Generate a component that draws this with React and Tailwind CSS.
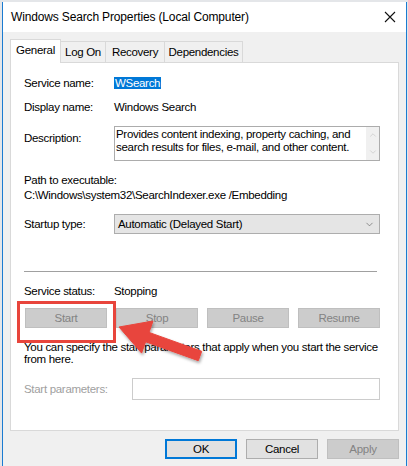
import { ChevronDown, ChevronUp } from "lucide-react";

const font = "font-['Segoe_UI','Liberation_Sans',sans-serif]";

// Вкладка диалога
const Tab = ({ label, active, width }) =>
  active ? (
    <div
      className={`relative z-10 -mb-px flex h-[24px] items-start justify-center border border-b-0 border-[#d9d9d9] bg-white pt-[3px] ${width}`}
    >
      {label}
    </div>
  ) : (
    <div
      className={`flex h-[21px] items-center justify-center border border-l-0 border-b-0 border-[#d9d9d9] bg-[#f0f0f0] pt-[1px] ${width}`}
    >
      {label}
    </div>
  );

// Серая неактивная кнопка
const DisabledButton = ({ label }) => (
  <div className="flex h-[20px] w-[82px] items-center justify-center border border-[#bfbfbf] bg-[#cccccc] text-[#838383]">
    {label}
  </div>
);

const Row = ({ label, children, className = "" }) => (
  <div className={`flex items-center ${className}`}>
    <div className="w-[90px] shrink-0">{label}</div>
    <div className="flex-1">{children}</div>
  </div>
);

export default function App() {
  return (
    <div
      className={`relative h-[466px] w-[408px] overflow-hidden bg-[#e4e6e9] pl-[2px] pt-[2px] text-[11.5px] leading-[15px] tracking-[-0.3px] text-black ${font}`}
    >
      {/* окно */}
      <div className="flex h-[470px] w-[405px] flex-col border-x border-[#1b7bd1] bg-[#f0f0f0]">
        {/* заголовок */}
        <div className="flex h-[30px] shrink-0 items-center justify-between bg-white pl-[8px] pr-[8px] text-[12px] tracking-[-0.15px]">
          <span>Windows Search Properties (Local Computer)</span>
          <svg width="12" height="12" viewBox="0 0 12 12" className="mr-[2px]">
            <path d="M1 1 L11 11 M11 1 L1 11" stroke="#111" strokeWidth="1.1" />
          </svg>
        </div>

        <div className="px-[7px] pt-[7px]">
          {/* вкладки */}
          <div className="flex items-end">
            <Tab label="General" active width="w-[51px]" />
            <Tab label="Log On" width="w-[45px]" />
            <Tab label="Recovery" width="w-[59px]" />
            <Tab label="Dependencies" width="w-[78px]" />
          </div>

          {/* панель */}
          <div className="h-[369px] border border-[#d9d9d9] bg-white pl-[13px] pr-[18px] pt-[13px]">
            <Row label="Service name:" className="h-[15px]">
              <span className="bg-[#0078d7] px-[1px] leading-[12px] text-white">
                WSearch
              </span>
            </Row>
            <Row label="Display name:" className="mt-[9px] h-[15px]">
              Windows Search
            </Row>

            <div className="mt-[11px] flex items-start">
              <div className="w-[90px] shrink-0 pt-[5px]">Description:</div>
              <div className="flex h-[35px] flex-1 border border-[#acacac]">
                <div className="flex-1 whitespace-nowrap pl-[1px] pt-[1px] leading-[13px]">
                  Provides content indexing, property caching, and
                  <br />
                  search results for files, e-mail, and other content.
                </div>
                <div className="flex w-[13px] flex-col items-center justify-between bg-[#f0f0f0] py-[3px] text-[#c2c2c2]">
                  <ChevronUp size={10} strokeWidth={1.5} />
                  <ChevronDown size={10} strokeWidth={1.5} />
                </div>
              </div>
            </div>

            <div className="mt-[12px]">Path to executable:</div>
            <div>C:\Windows\system32\SearchIndexer.exe /Embedding</div>

            <Row label="Startup type:" className="mt-[11px]">
              <div className="flex h-[20px] items-center justify-between border border-[#adadad] bg-[#e5e5e5] pl-[3px] pr-[4px]">
                <span>Automatic (Delayed Start)</span>
                <ChevronDown size={11} strokeWidth={1.3} className="text-[#555]" />
              </div>
            </Row>

            <div className="mr-[3px] mt-[37px] h-px bg-[#a0a0a0]" />

            <Row label="Service status:" className="mt-[12px] h-[15px]">
              Stopping
            </Row>

            <div className="ml-[1px] mt-[9px] flex justify-between">
              <DisabledButton label="Start" />
              <DisabledButton label="Stop" />
              <DisabledButton label="Pause" />
              <DisabledButton label="Resume" />
            </div>

            <div className="mt-[13px] whitespace-nowrap leading-[12px]">
              You can specify the start parameters that apply when you start the service
              <br />
              from here.
            </div>

            <div className="mt-[13px] flex items-center">
              <div className="w-[108px] shrink-0 text-[#a0a0a0]">
                Start parameters:
              </div>
              <div className="h-[22px] flex-1 border border-[#cccccc] bg-white" />
            </div>
          </div>

          {/* нижние кнопки */}
          <div className="mt-[8px] flex justify-end gap-[9px]">
            <div className="flex h-[20px] w-[72px] items-center justify-center border-2 border-[#0078d7] bg-[#e1e1e1]">
              OK
            </div>
            <div className="flex h-[20px] w-[72px] items-center justify-center border border-[#adadad] bg-[#e1e1e1]">
              Cancel
            </div>
            <div className="flex h-[20px] w-[72px] items-center justify-center border border-[#bfbfbf] bg-[#cccccc] text-[#838383]">
              Apply
            </div>
          </div>
        </div>
      </div>

      {/* выделение и стрелка поверх */}
      <div className="absolute left-[17px] top-[301px] h-[42px] w-[99px] border-[3px] border-[#e8453c]" />
      <svg
        className="absolute left-0 top-0"
        width="408"
        height="466"
        viewBox="0 0 408 466"
      >
        <defs>
          <filter id="sh" x="-20%" y="-20%" width="140%" height="140%">
            <feDropShadow dx="1" dy="2" stdDeviation="1.5" floodColor="#000" floodOpacity="0.35" />
          </filter>
        </defs>
        <polygon
          points="119,327 153,321 149,332.4 201.7,351.3 198.3,360.7 145.6,341.8 141.6,353.1"
          fill="#e8453c"
          strokeLinejoin="round"
          stroke="#e8453c"
          strokeWidth="1"
          filter="url(#sh)"
        />
      </svg>
    </div>
  );
}
